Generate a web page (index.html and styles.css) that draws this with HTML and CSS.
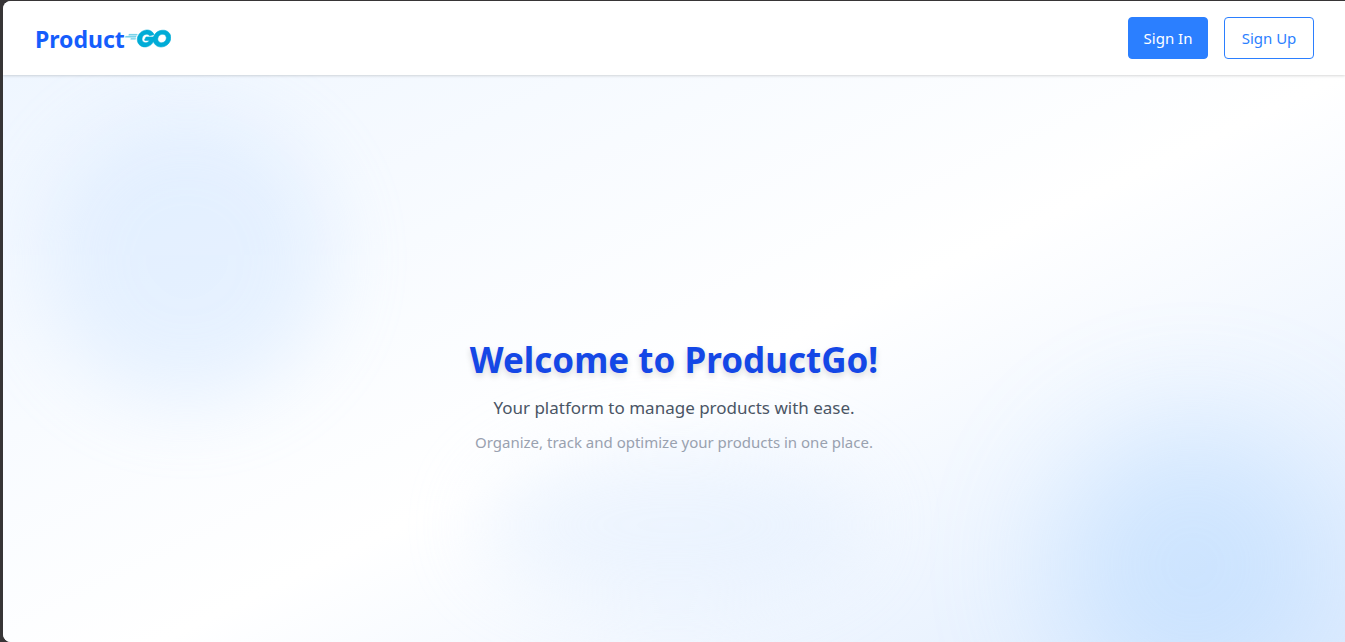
FILE: index.html
```html
<!DOCTYPE html>
<html lang="en">
<head>
<meta charset="utf-8">
<meta name="viewport" content="width=device-width, initial-scale=1">
<title>ProductGo</title>
<link rel="stylesheet" href="styles.css">
</head>
<body>
<div class="window">
  <header class="navbar">
    <a class="brand" href="#">
      <span>Product</span>
      <svg class="brand-logo" viewBox="0 7 24 10" role="img" aria-label="Go">
        <path class="brand-lines" d="M1.811 10.231c-.047 0-.058-.023-.035-.059l.246-.315c.023-.035.081-.058.128-.058h4.172c.046 0 .058.035.035.07l-.199.303c-.023.036-.082.07-.117.07zM.047 11.306c-.047 0-.059-.023-.035-.058l.245-.316c.023-.035.082-.058.129-.058h5.328c.047 0 .07.035.058.07l-.093.28c-.012.047-.058.07-.105.07zm2.828 1.075c-.047 0-.059-.035-.035-.07l.163-.292c.023-.035.07-.07.117-.07h2.337c.047 0 .07.035.07.082l-.023.28c0 .047-.047.082-.082.082z"/>
        <path class="brand-mark" d="M15.004 10.021c-.736.187-1.239.327-1.963.514-.176.046-.187.058-.34-.117-.174-.199-.303-.327-.548-.444-.737-.362-1.45-.257-2.115.175-.795.514-1.204 1.274-1.192 2.22.011.935.654 1.706 1.577 1.835.795.105 1.46-.175 1.987-.77.105-.13.198-.27.315-.434H10.47c-.245 0-.304-.152-.222-.35.152-.362.432-.97.596-1.274a.315.315 0 01.292-.187h4.253c-.023.316-.023.631-.07.947a4.983 4.983 0 01-.958 2.29c-.841 1.11-1.94 1.8-3.33 1.986-1.145.152-2.209-.07-3.143-.77-.865-.655-1.356-1.52-1.484-2.595-.152-1.274.222-2.419.993-3.424.83-1.086 1.928-1.776 3.272-2.02 1.098-.2 2.15-.07 3.096.571.62.41 1.063.97 1.356 1.648.07.105.023.164-.117.2m3.868 6.461c-1.064-.024-2.034-.328-2.852-1.029a3.665 3.665 0 01-1.262-2.255c-.21-1.32.152-2.489.947-3.529.853-1.122 1.881-1.706 3.272-1.95 1.192-.21 2.314-.095 3.33.595.923.63 1.496 1.484 1.648 2.605.198 1.578-.257 2.863-1.344 3.962-.771.783-1.718 1.273-2.805 1.495-.315.06-.63.07-.934.106zm2.78-4.72c-.011-.153-.011-.27-.034-.387-.21-1.157-1.274-1.81-2.384-1.554-1.087.245-1.788.935-2.045 2.033-.21.912.234 1.835 1.075 2.21.643.28 1.285.244 1.905-.07.923-.48 1.425-1.228 1.484-2.233z"/>
      </svg>
    </a>
    <nav class="actions">
      <a class="button button-solid" href="#signin">Sign In</a>
      <a class="button button-outline" href="#signup">Sign Up</a>
    </nav>
  </header>
  <main class="hero">
    <div class="blob blob-left"></div>
    <div class="blob blob-right"></div>
    <div class="blob blob-center"></div>
    <div class="hero-text">
      <h1 class="title">Welcome to ProductGo!</h1>
      <p class="lead">Your platform to manage products with ease.</p>
      <p class="note">Organize, track and optimize your products in one place.</p>
    </div>
  </main>
</div>
</body>
</html>
```

FILE: styles.css
```css
* {
  box-sizing: border-box;
}

body {
  margin: 0;
  height: 100vh;
  padding: 1px 0 0 3px;
  overflow: hidden;
  background: #373536;
  font-family: "Segoe UI", "Noto Sans", "Open Sans", sans-serif;
  font-size: 16px;
  line-height: 24px;
}

.window {
  height: 100%;
  overflow: hidden;
  border-radius: 8px 0 0 8px;
  background: #fff;
}

.navbar {
  position: relative;
  z-index: 1;
  display: flex;
  align-items: center;
  justify-content: space-between;
  padding: 16px 31px 16px 32px;
  background: #fff;
  box-shadow: 0 1px 3px rgba(0, 0, 0, 0.1), 0 1px 2px rgba(0, 0, 0, 0.06);
}

.brand {
  display: flex;
  align-items: center;
  color: #155dfc;
  font-size: 23px;
  font-weight: 700;
  line-height: 32px;
  text-decoration: none;
}

.brand span {
  padding-top: 2px;
}

.brand-logo {
  width: 46px;
  height: 19px;
  fill: #00acd7;
}

.brand-lines {
  opacity: 0.6;
  stroke: #00acd7;
  stroke-width: 0.25;
}

.brand-mark {
  stroke: #00acd7;
  stroke-width: 0.3;
}

.actions {
  display: flex;
  gap: 16px;
}

.button {
  min-width: 80px;
  padding: 8px 14px;
  border: 1px solid #2b7fff;
  border-radius: 4px;
  font-size: 15px;
  text-align: center;
  text-decoration: none;
}

.button-solid {
  background: #2b7fff;
  color: #fff;
}

.button-outline {
  min-width: 90px;
  color: #2b7fff;
}

.hero {
  position: relative;
  display: flex;
  align-items: center;
  justify-content: center;
  min-height: 100vh;
  overflow: hidden;
  background: linear-gradient(to bottom right, #eff6ff, #fff, #dbeafe);
}

.blob {
  position: absolute;
  border-radius: 50%;
}

.blob-left {
  top: 40px;
  left: 40px;
  width: 288px;
  height: 288px;
  background: #bedbff;
  opacity: 0.3;
  filter: blur(40px);
}

.blob-right {
  right: 8px;
  bottom: 8px;
  width: 288px;
  height: 288px;
  background: #8ec5ff;
  opacity: 0.3;
  filter: blur(64px);
}

.blob-center {
  bottom: 112px;
  left: 50%;
  width: 384px;
  height: 160px;
  background: #dbeafe;
  opacity: 0.4;
  filter: blur(40px);
  transform: translateX(-50%);
}

.hero-text {
  position: relative;
  text-align: center;
}

.title {
  margin: 0 0 14px;
  padding-top: 2px;
  color: #1447e6;
  font-size: 35px;
  font-weight: 700;
  line-height: 40px;
  text-shadow: 0 3px 6px rgba(0, 0, 0, 0.15);
}

.lead {
  margin: 0 0 8px;
  color: #4a5565;
  font-size: 17px;
  line-height: 28px;
}

.note {
  margin: 0;
  color: #99a1af;
  font-size: 15px;
}
```
